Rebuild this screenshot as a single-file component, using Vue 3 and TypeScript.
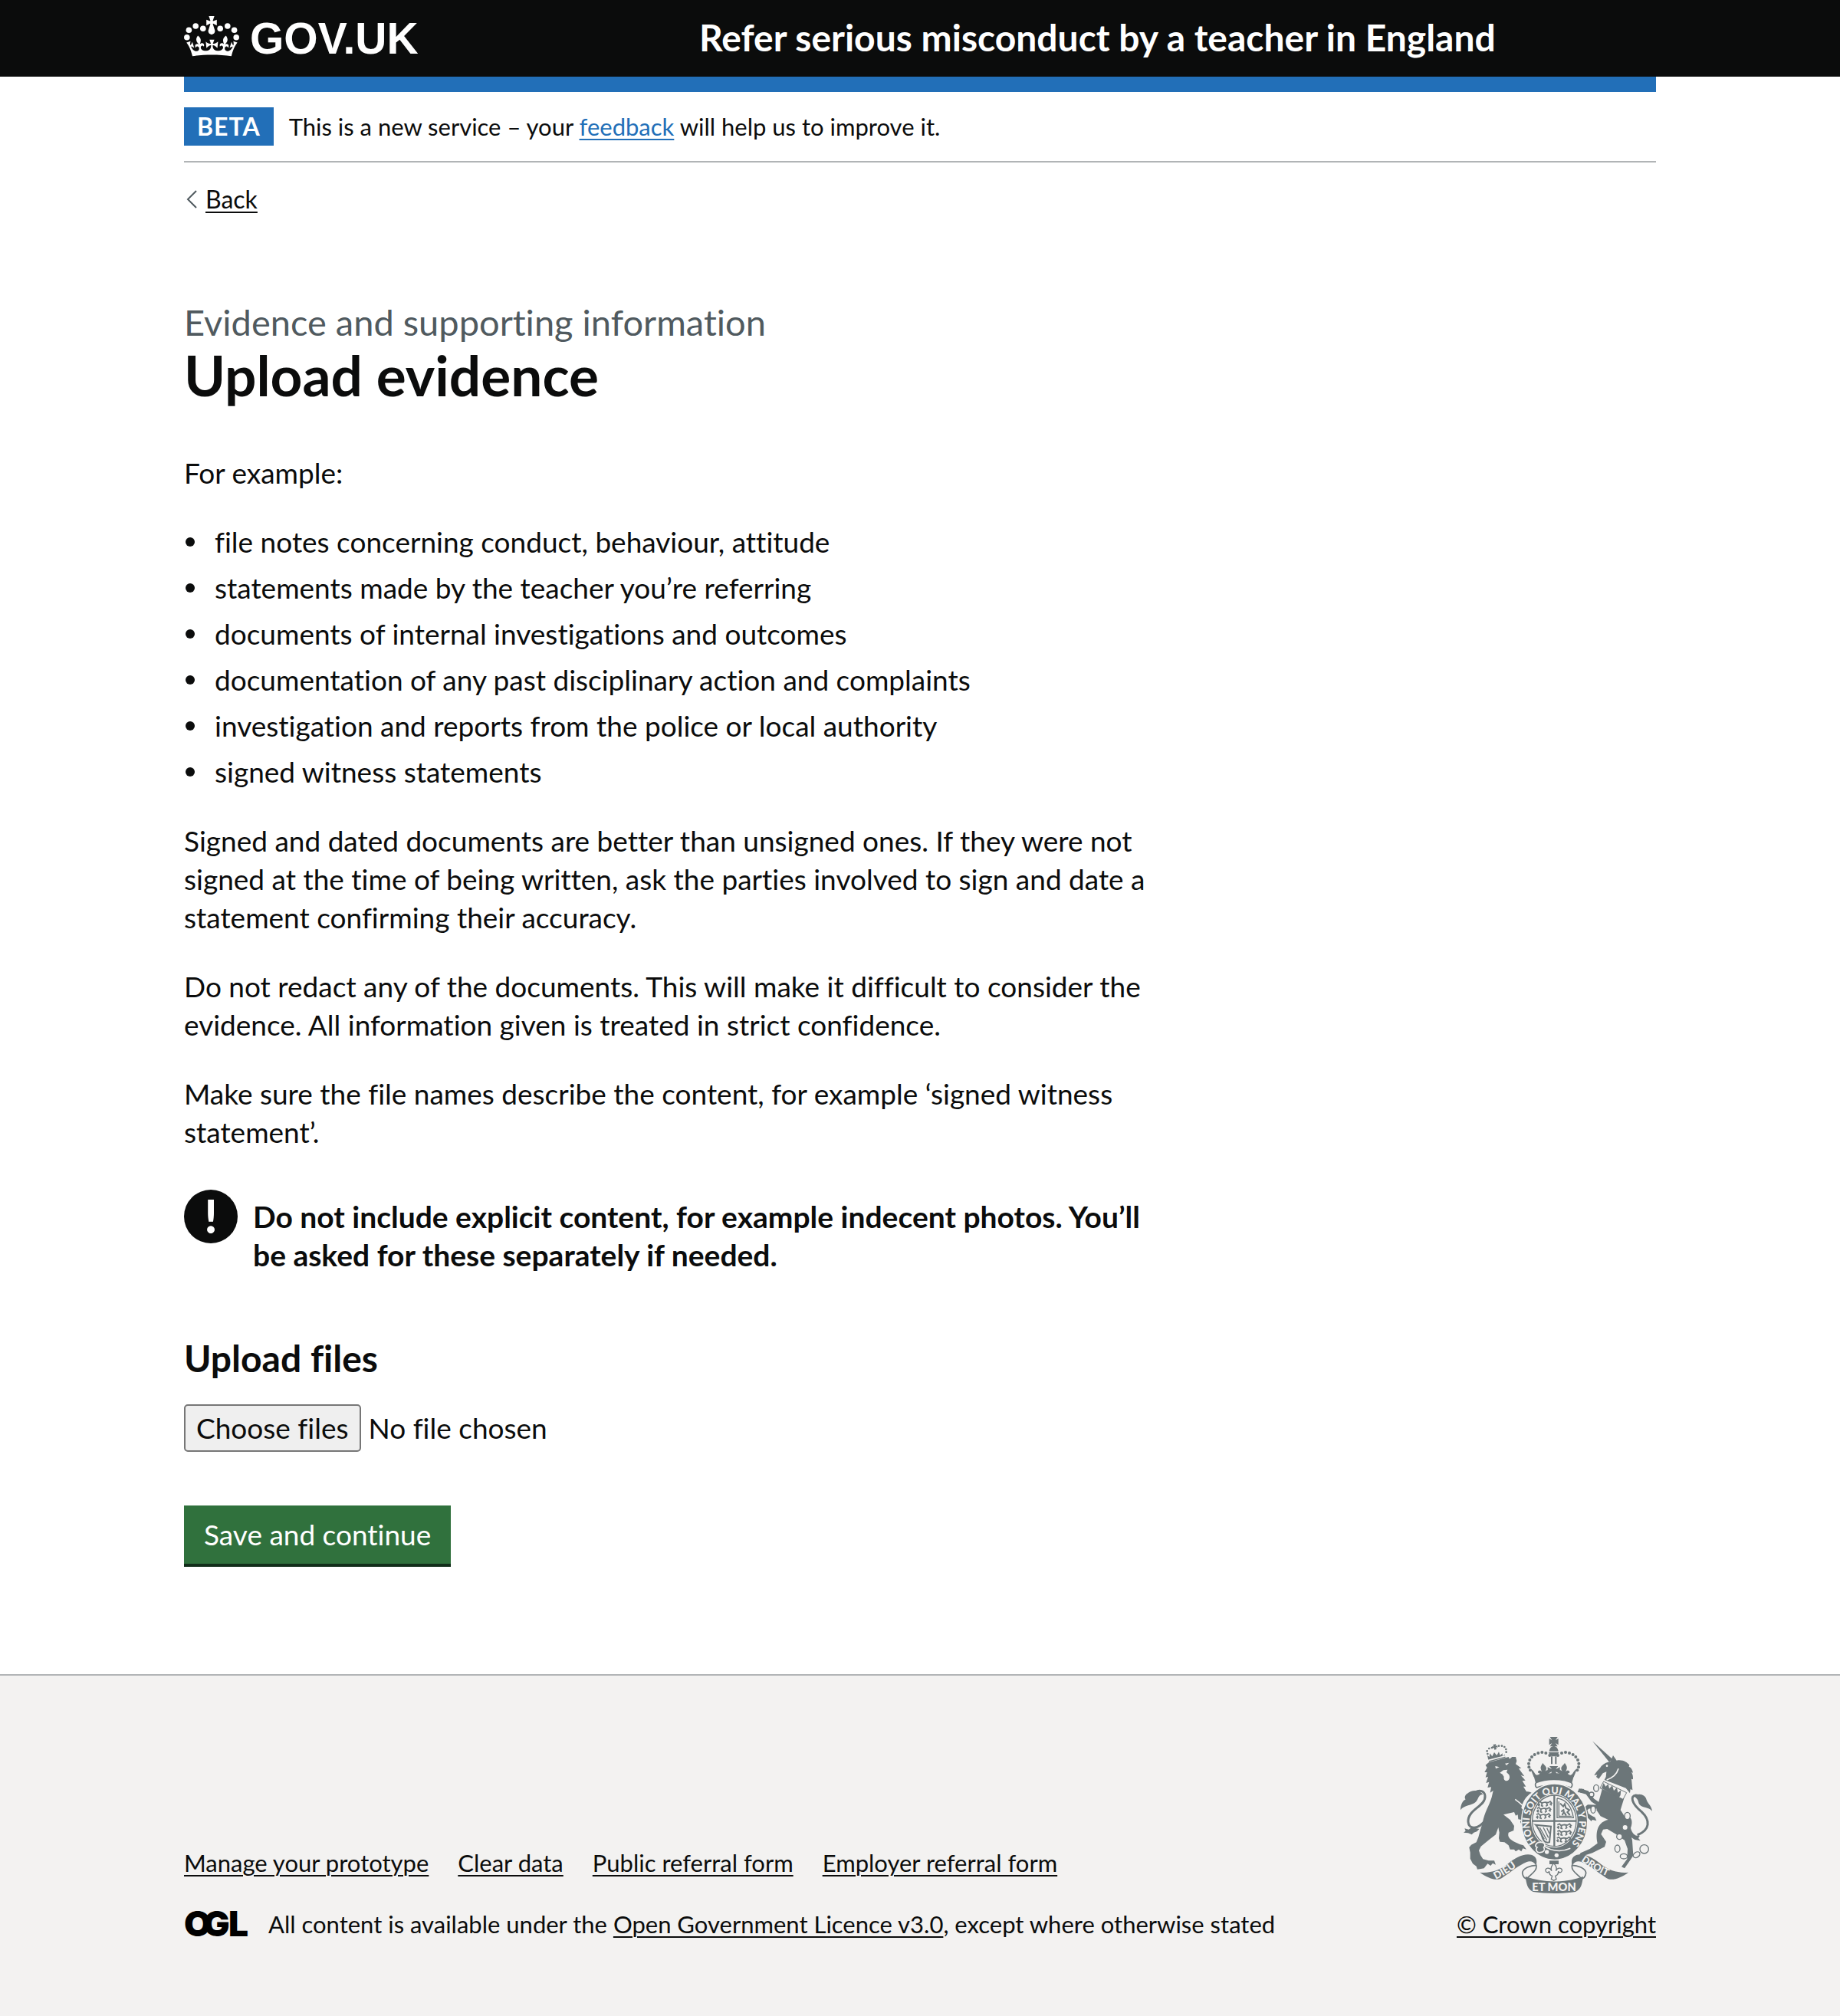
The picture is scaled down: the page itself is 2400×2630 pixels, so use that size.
<script setup lang="ts">
import { ref } from 'vue'

const examples: string[] = [
  'file notes concerning conduct, behaviour, attitude',
  'statements made by the teacher you’re referring',
  'documents of internal investigations and outcomes',
  'documentation of any past disciplinary action and complaints',
  'investigation and reports from the police or local authority',
  'signed witness statements'
]

const footerLinks: string[] = [
  'Manage your prototype',
  'Clear data',
  'Public referral form',
  'Employer referral form'
]

const fileStatus = ref('No file chosen')

function onFilesChange(event: Event): void {
  const files = (event.target as HTMLInputElement).files
  if (!files || files.length === 0) fileStatus.value = 'No file chosen'
  else if (files.length === 1) fileStatus.value = files[0].name
  else fileStatus.value = `${files.length} files`
}

// Beads along the left arch of the royal crown; the right arch mirrors them
const crownBeads: [number, number][] = [
  [361, 90], [346, 81], [331, 78], [316, 81], [302, 87], [291, 96], [283, 108], [279, 122], [280, 136], [285, 148]
]

const lionCrownBeads: [number, number][] = [
  [118, 84], [116, 73], [124, 63], [135, 60], [162, 53], [174, 53], [184, 57], [190, 66], [191, 77]
]

const logoBeads: [number, number][] = [
  [12.4, 12.3], [7.6, 10.7], [3.2, 13.3], [1.9, 18.1], [23.6, 12.3], [28.4, 10.7], [32.8, 13.3], [34.1, 18.1]
]
</script>

<template>
  <div class="page">
    <header class="header">
      <div class="container header-inner">
        <a class="logo" href="#" aria-label="GOV.UK">
          <svg width="310" height="100" viewBox="0 0 310 100" fill="currentColor">
            <g transform="translate(0 12.6) scale(2)">
              <circle v-for="(bead, i) in logoBeads" :key="i" :cx="bead[0]" :cy="bead[1]" r="1.9" />
              <path
                d="M19 9.1l2.4 1.2V6.6l-2.4.8-.2-.2 1-3h-3.6l1 3-.2.2-2.4-.8v3.7L17 9.1l.2.2-1.3 4.1c-.1.2-.1.4-.1.6 0 1.1.8 2 1.9 2.2h.6c1.1-.2 1.9-1.1 1.9-2.2 0-.2 0-.4-.1-.6l-1.3-4.1z"
              />
              <path
                transform="translate(1.2 .3) scale(1.05 1)"
                d="M16 29.2c4.4 0 8.6.3 12.3.8 1.1-4.5 2.4-7 3.7-8.8l-2.5-.9c.2 1.3.3 1.9 0 2.7-.4-.4-.8-1.1-1.1-2.3l-1.2 4c.7-.5 1.3-.8 2-.9-1.1 2.5-2.6 3.1-3.5 3-1.1-.2-1.7-1.2-1.5-2.1.3-1.2 1.5-1.5 2.1-.1 1.1-2.3-.8-3-2-2.3 1.9-1.9 2.1-3.5.6-5.6-2.1 1.6-2.1 3.2-1.2 5.5-1.2-1.4-3.2-.6-2.5 1.6.9-1.4 2.1-.5 1.9.8-.2 1.1-1.7 2.1-3.5 1.9-2.7-.2-2.9-2.1-2.9-3.6.7-.1 1.9.5 2.9 1.9l.4-4.3c-1.1 1.1-2.1 1.4-3.2 1.4.4-1.2.9-2.6.9-2.6h-3s.5 1.4.9 2.6c-1.1 0-2.1-.2-3.2-1.4l.4 4.3c1-1.4 2.2-2 2.9-1.9-.1 1.5-.2 3.4-2.9 3.6-1.9.2-3.4-.8-3.5-1.9-.2-1.3 1-2.2 1.9-.8.7-2.3-1.2-3-2.5-1.6.9-2.2.9-3.9-1.2-5.5-1.5 2-1.3 3.7.6 5.6-1.2-.7-3.1 0-2 2.3.6-1.4 1.8-1.1 2.1.1.2.9-.3 1.9-1.5 2.1-.9.2-2.4-.5-3.5-3 .6 0 1.2.3 2 .9l-1.2-4c-.3 1.1-.7 1.9-1.1 2.3-.3-.8-.2-1.4 0-2.7l-2.5.9c1.3 1.8 2.6 4.3 3.7 8.8 3.7-.5 7.9-.8 12.3-.8z"
              />
            </g>
            <text class="logo-text" x="86" y="70">GOV.UK</text>
          </svg>
        </a>
        <a class="service-name" href="#">Refer serious misconduct by a teacher in England</a>
      </div>
    </header>

    <div class="container">
      <div class="blue-bar"></div>
      <div class="phase-banner">
        <strong class="tag">BETA</strong>
        <span>This is a new service – your <a class="feedback" href="#">feedback</a> will help us to improve it.</span>
      </div>

      <nav class="back" aria-label="Back">
        <svg width="16" height="24" viewBox="0 0 16 24" fill="none" stroke="#505a5f" stroke-width="2" aria-hidden="true">
          <path d="M14 1 3 12l11 11" />
        </svg>
        <a href="#">Back</a>
      </nav>

      <main class="main">
        <span class="caption">Evidence and supporting information</span>
        <h1>Upload evidence</h1>
        <p>For example:</p>
        <ul class="examples">
          <li v-for="item in examples" :key="item">{{ item }}</li>
        </ul>
        <p>
          Signed and dated documents are better than unsigned ones. If they were not signed at the time of being
          written, ask the parties involved to sign and date a statement confirming their accuracy.
        </p>
        <p>
          Do not redact any of the documents. This will make it difficult to consider the evidence. All information
          given is treated in strict confidence.
        </p>
        <p>Make sure the file names describe the content, for example ‘signed witness statement’.</p>

        <div class="warning">
          <span class="warning-icon" aria-hidden="true">!</span>
          <strong>
            Do not include explicit content, for example indecent photos. You’ll be asked for these separately if
            needed.
          </strong>
        </div>

        <form @submit.prevent>
          <label class="upload-label" for="evidence">Upload files</label>
          <div class="upload">
            <span class="upload-button" aria-hidden="true">Choose files</span>
            <span aria-hidden="true">{{ fileStatus }}</span>
            <input id="evidence" type="file" multiple @change="onFilesChange" />
          </div>
          <button class="submit" type="submit">Save and continue</button>
        </form>
      </main>
    </div>

    <footer class="footer">
      <div class="container footer-inner">
        <div class="footer-left">
          <nav class="footer-links" aria-label="Support links">
            <a v-for="link in footerLinks" :key="link" href="#">{{ link }}</a>
          </nav>
          <div class="licence">
            <svg class="ogl" width="84" height="36" viewBox="0 0 84 36" role="img" aria-label="Open Government Licence">
              <text x="0 25 58" y="34">OGL</text>
            </svg>
            <span>All content is available under the <a href="#">Open Government Licence v3.0</a>, except where otherwise stated</span>
          </div>
        </div>

        <a class="copyright" href="#">
          <svg class="crest" width="250" height="204" viewBox="12 18 750 612" aria-hidden="true">
            <defs>
              <path id="garter-line" d="M308 430A97 113 0 1 1 450 430" />
              <path id="dieu-line" d="M150 576Q205 550 256 506" />
              <path id="droit-line" d="M483 503Q550 552 620 576" />
              <g id="arch">
                <circle v-for="(bead, i) in crownBeads" :key="i" :cx="bead[0]" :cy="bead[1]" r="6" />
                <path d="M334 120c-5 8-10 14-8 22 1 5 3 9 5 12-5-7-14-6-16 0-1 5 4 7 7 5-1 6-6 9-11 8-8-2-10-12-18-20l-5-3c2 11 7 20 11 31l78-2v-12c-10 4-21 3-24-4 3 2 8 0 7-5-2-6-11-6-17 1 3-4 5-8 5-12 0-8-10-14-14-21z" />
              </g>
              <g id="three-lions" fill="none" stroke-width="5">
                <path d="M3 6l8-4 6 6 14-3 12 2 8-5 6 7-8 5M6 10l4 7m10-9-3 11 7 2m12-14 4 10-6 4m18-12 4 9M2 14l7 7" />
              </g>
            </defs>

            <!-- Lion supporter -->
            <path d="M110 128L122 118 200 96l4 8 10-8h14l4 16-4 12 22 16-10 2 22 30-14-4 18 20-12 2 14 22-10 0 12 20c10-2 14 2 20 4-22 14-34 34-40 60l16 16 22 24 2 16-4 22-8-8-6 8-8-10h-12l-6-14 4-8-12-2-2-18-8 4-6-14-26 6-16 4 26 20 16 24-2 18-20 8c-5 18 5 26 26 38l18 8 14 4 12 16-14-4-6 12-10-8-12 8-6-8h-16l-6-16-16-12-18-2-4-14 2-22-4-20-10 28-26 20-32 26-8 16 6 18 10 16 22 6h22l6 16-12-6-8 10-12-8-14 18-12 2-14 2-4-12-14-10-10-20v-24l-4-20 8-10 20-10 8-20 8-30 8-24c8-46 26-68 36-102l6-26-12 8 4-22-14 2 6-22-12 4 8-24-10 2 6-20-10 0 10-18z" />
            <path d="M112 340C80 384 44 380 42 350 40 300 112 290 108 248c-2-20-22-24-38-14" fill="none" stroke="#6c7679" stroke-width="9" />
            <path d="M12 304c0-20 8-36 20-42-6-6-2-18 6-22 20-18 48-14 62 2-20 2-16 18-30 32-12 12-44 10-58 30z" />
            <path d="M28 376l16 4 12-8 30 6-10 10-12 4-8 8-14-6-18-2 8-6z" />
            <path class="paper" d="M148 132l16 4-14 6zm38-10l16-3-10 10zM166 158l14-10 16-2-4 10 10 10c6 14-2 24-10 24-8 0-12-8-10-16l-6-10z" />
            <path class="rim" d="M226 262C262 288 290 320 293 362" />
            <circle v-for="(bead, i) in lionCrownBeads" :key="i" :cx="bead[0]" :cy="bead[1]" r="4" />
            <path d="M139 48l12-2-2 7 7-2 2 8-7-1 2 8-8 2-2-8-6 3-2-8 7 0z" />
            <path d="M120 104l-3-14 8 6 2-14 9 12 8-16 10 12 8-14 5 14 9-8 1 12 8-8 3 12-64 18z" />
            <path class="rim" d="M120 110l76-20" />

            <!-- Unicorn supporter -->
            <path d="M528 34l80 72-14 10z" />
            <path d="M543 156c8-10 14-14 20-24 12-12 24-16 36-18l10-24 14 20c24-4 40 6 50 18l-2 6c10 4 14 14 16 24l-6-2c6 10 6 18 6 28l-6-2 4 44-8-4-2 16-16-20-46-18-38-14 6-12 2-20-14 6-16 22-10-8 4-8-12 2z" />
            <circle class="paper" cx="585" cy="131" r="4" />
            <path class="rim" d="M584 186c24-8 40-24 46-44" />
            <path d="M568 216l84 42-14 46c10 14 26 40 32 66l14 52 4 60-12 18-22 32-12-6 22-30 2-40-12-34-34-24-34-20-16 2-8 18 20 30-6 20-48 24-26 8-12 18-26 4 18-30 36-16 30-22c-10-50 4-84 42-92l-30-14-16-24z" />
            <path d="M482 228l26 8 22 30 24 16M552 292l-40-2-12 12 6 20 20 14" fill="none" stroke="#6c7679" stroke-width="15" stroke-linejoin="round" />
            <path d="M470 234l6-14 20 2-8 14zM514 322l24 10 6 14-16-4-4 6-14-14z" />
            <path d="M572 192l90 44-14 26-90-44z" fill="#f3f2f1" stroke="#6c7679" stroke-width="3" />
            <path d="M564 218l8-20 8 14 10-10 4 18 12-12 6 20 12-12 4 20 12-10-2 20-8 12z" />
            <path d="M644 330c40-10 44 20 34 44 6 24 20 34 36 30l-6 10 8 10-22-4-18-12-20-26z" />
            <path d="M704 402c50-20 52-58 16-92-38-30-46-62-22-64 14 0 20 6 24 18" fill="none" stroke="#6c7679" stroke-width="9" />
            <path d="M690 250c22-16 46-4 50 14 4 14 20 24 22 44-16-18-36-10-50-26-6-10-2-20-22-32z" />
            <g fill="#f3f2f1" stroke="#6c7679" stroke-width="4">
              <circle cx="731" cy="457" r="17" />
              <ellipse cx="701" cy="479" rx="14" ry="10" transform="rotate(-35 701 479)" />
              <ellipse cx="651" cy="485" rx="14" ry="10" />
              <ellipse cx="626" cy="455" rx="10" ry="14" />
              <circle cx="634" cy="408" r="11" />
              <circle cx="656" cy="372" r="11" />
              <ellipse cx="665" cy="327" rx="11" ry="14" />
              <ellipse cx="531" cy="302" rx="9" ry="14" />
              <circle cx="525" cy="243" r="9" />
              <ellipse cx="543" cy="218" rx="10" ry="13" />
            </g>

            <!-- Royal crown -->
            <path d="M362 18h30l-8 13 11-7v25l-11-7 8 13h-30l8-13-11 7V24l11 7z" />
            <path d="M359 74c2-14 10-20 18-20s16 6 18 20zM357 78h40c-4 12-10 16-20 16s-16-4-20-16z" />
            <path d="M366 94h6v30h-6zm16 0h6v30h-6z" />
            <path d="M360 132h34l-9 12 16-8v26l-16-8 6 20h-28l6-20-16 8v-26l16 8z" />
            <use href="#arch" />
            <use href="#arch" transform="matrix(-1 0 0 1 754 0)" />
            <path d="M299 172c40-16 116-16 156 0l-7 26c-38-16-104-16-142 0z" />
            <path d="M310 196c38-16 96-16 134 0 8 4 6 16 0 20-40-14-94-14-134 0-6-4-8-16 0-20z" fill="#f3f2f1" stroke="#6c7679" stroke-width="5" />

            <!-- Garter and shield -->
            <ellipse cx="380" cy="350" rx="129" ry="149" fill="#6c7679" stroke="#f3f2f1" stroke-width="4" />
            <ellipse cx="379" cy="346" rx="91" ry="105" fill="#f3f2f1" />
            <ellipse cx="379" cy="346" rx="86" ry="100" fill="none" stroke="#6c7679" stroke-width="4" />
            <text class="motto" font-size="38"><textPath href="#garter-line">HONI SOIT QUI MAL Y PENSE</textPath></text>
            <path d="M379 246v200M293 347h172" fill="none" stroke="#6c7679" stroke-width="7" />
            <g stroke="#6c7679">
              <use href="#three-lions" x="312" y="268" />
              <use href="#three-lions" x="308" y="292" />
              <use href="#three-lions" x="306" y="316" />
              <use href="#three-lions" x="388" y="356" />
              <use href="#three-lions" x="388" y="382" />
              <use href="#three-lions" x="386" y="408" />
              <path d="M390 258v76h66M390 258c34 4 56 30 64 76M397 270v58h50" fill="none" stroke-width="4" />
              <path d="M402 278l12 12 6-10 4 16 14 8-8 8 10 12m-22-22-12 8m12-2-8 16m8-10 8 12" fill="none" stroke-width="6" />
              <path d="M306 362l60 6-6 62c-14 4-22-4-26-14-6-20-14-40-28-54z" fill="none" stroke-width="6" />
              <path d="M322 372l28 50m-14-50 20 40m-6-38 10 22M312 370l28 48" fill="none" stroke-width="4" />
            </g>
            <path class="rim" d="M322 428c30 36 80 44 120 26" />
            <circle class="paper" cx="350" cy="468" r="8" />
            <circle class="paper" cx="388" cy="481" r="8" />
            <path d="M318 430c-14 6-16 16-6 20-8 8-2 22 12 20 14 0 20-10 14-20 8-8 2-20-8-20z" fill="#6c7679" stroke="#f3f2f1" stroke-width="5" />
            <path d="M360 502h36v14h-36z" />
            <path d="M377 512c-8 10-14 18-8 30-8-16-26-12-24 0 2 8 12 8 14 2 0 12 4 16 12 18l-4 12 10 6 10-6-4-12c8-2 12-6 12-18 2 6 12 6 14-2 2-12-16-16-24 0 6-12 0-20-8-30z" fill="#f3f2f1" stroke="#6c7679" stroke-width="4" />

            <!-- Ribbon with the second motto -->
            <path d="M310 520c-24 0-54 12-56 30 2 18 14 24 24 24M447 520c24 0 54 12 56 30-2 18-14 24-24 24M308 518c6 24-18 34-34 52M449 518c-6 24 18 34 34 52" fill="none" stroke="#6c7679" stroke-width="5" />
            <path d="M88 548c40 4 78-8 110-34 30-24 62-42 94-34 20 8 20 26 16 42-10-18-24-20-38-14-30 12-62 40-96 62-20 14-56 0-86-22z" />
            <path d="M669 548c-40 4-78-8-110-34-30-24-62-42-94-34-20 8-20 26-16 42 10-18 24-20 38-14 30 12 62 40 96 62 20 14 56 0 86-22z" />
            <path d="M266 564c70 26 156 26 226 0-4 30-8 50-30 60-50 8-116 8-166 0-22-10-26-30-30-60z" />
            <text class="motto" font-size="40"><textPath href="#dieu-line">DIEU</textPath></text>
            <text class="motto" font-size="38"><textPath href="#droit-line">DROIT</textPath></text>
            <text class="motto" font-size="44" x="378" y="620" text-anchor="middle">ET MON</text>
          </svg>
          <span>© Crown copyright</span>
        </a>
      </div>
    </footer>
  </div>
</template>

<style>
body {
  background: #f3f2f1;
}
</style>

<style scoped>
.page {
  background: #ffffff;
  color: #0b0c0c;
  font-family: Lato, "Liberation Sans", sans-serif;
  font-size: 37px;
  line-height: 50px;
  font-variant-ligatures: no-common-ligatures;
}

a {
  color: inherit;
  text-decoration-thickness: 2px;
  text-underline-offset: 4px;
}

.container {
  max-width: 1920px;
  margin: 0 auto;
}

.header {
  background: #0b0c0c;
  color: #ffffff;
}

.header-inner {
  display: grid;
  grid-template-columns: 35% 1fr;
  align-items: center;
}

.header a {
  text-decoration: none;
}

.logo svg {
  display: block;
}

.logo-text {
  font-family: "Liberation Sans", sans-serif;
  font-size: 57px;
  font-weight: 700;
}

.service-name {
  font-size: 48px;
  font-weight: 700;
  line-height: 60px;
  padding-bottom: 2px;
}

.blue-bar {
  height: 20px;
  background: #226fb8;
}

.phase-banner {
  display: flex;
  align-items: center;
  gap: 20px;
  padding: 20px 0;
  border-bottom: 2px solid #b1b4b6;
  font-size: 31px;
}

.tag {
  padding: 0 17px;
  background: #226fb8;
  color: #ffffff;
  font-size: 32px;
  letter-spacing: 1px;
}

.feedback {
  color: #226fb8;
}

.back {
  display: flex;
  align-items: center;
  gap: 10px;
  margin: 28px 0 30px;
  padding-left: 2px;
  font-size: 32px;
  line-height: 40px;
}

.main {
  max-width: 1260px;
  padding: 80px 0 144px;
}

.caption {
  display: block;
  color: #505a5f;
  font-size: 47px;
  line-height: 60px;
}

h1 {
  margin: 0 0 64px;
  font-size: 73px;
  font-weight: 700;
  line-height: 78px;
}

p {
  margin: 0 0 40px;
}

.examples {
  display: grid;
  gap: 10px;
  margin: 0 0 40px;
  padding-left: 2px;
  list-style: none;
}

.examples li {
  display: flex;
  align-items: center;
  gap: 26px;
}

.examples li::before {
  content: "";
  flex: none;
  width: 12px;
  height: 12px;
  border-radius: 50%;
  background: #0b0c0c;
}

.warning {
  display: flex;
  gap: 20px;
  margin: 50px 0 60px;
}

.warning strong {
  padding: 10px 0 20px;
  font-size: 39px;
}

.warning-icon {
  flex: none;
  width: 70px;
  height: 70px;
  border-radius: 50%;
  background: #0b0c0c;
  color: #ffffff;
  font-size: 60px;
  font-weight: 900;
  line-height: 68px;
  text-align: center;
}

.upload-label {
  display: block;
  margin-bottom: 30px;
  font-size: 48px;
  font-weight: 700;
  line-height: 60px;
}

.upload {
  position: relative;
  display: flex;
  align-items: center;
  gap: 10px;
  width: fit-content;
  margin-bottom: 70px;
}

.upload input {
  position: absolute;
  inset: 0;
  width: 100%;
  opacity: 0;
  cursor: pointer;
}

.upload-button {
  padding: 4px 14px;
  border: 2px solid #767676;
  border-radius: 5px;
  background: #efefef;
}

.submit {
  display: block;
  padding: 13px 26px;
  border: 0;
  background: #30713d;
  box-shadow: 0 4px 0 #122d1a;
  color: #ffffff;
  font: inherit;
  cursor: pointer;
}

.footer {
  padding: 80px 0 100px;
  border-top: 2px solid #b1b4b6;
  background: #f3f2f1;
  font-size: 31px;
  line-height: 40px;
}

.footer-inner {
  display: flex;
  align-items: flex-end;
  justify-content: space-between;
}

.footer-links {
  display: flex;
  gap: 38px;
  margin-bottom: 40px;
}

.licence {
  display: flex;
  align-items: center;
  gap: 26px;
}

.ogl {
  font-family: Inter, sans-serif;
  font-size: 46px;
  font-weight: 900;
  overflow: visible;
}

.copyright {
  display: flex;
  flex-direction: column;
  align-items: center;
  gap: 20px;
}

.crest {
  fill: #6c7679;
}

.crest .paper,
.motto {
  fill: #f3f2f1;
}

.rim {
  fill: none;
  stroke: #f3f2f1;
  stroke-width: 5px;
}

.motto {
  font-family: Lato, sans-serif;
  font-weight: 900;
}
</style>
